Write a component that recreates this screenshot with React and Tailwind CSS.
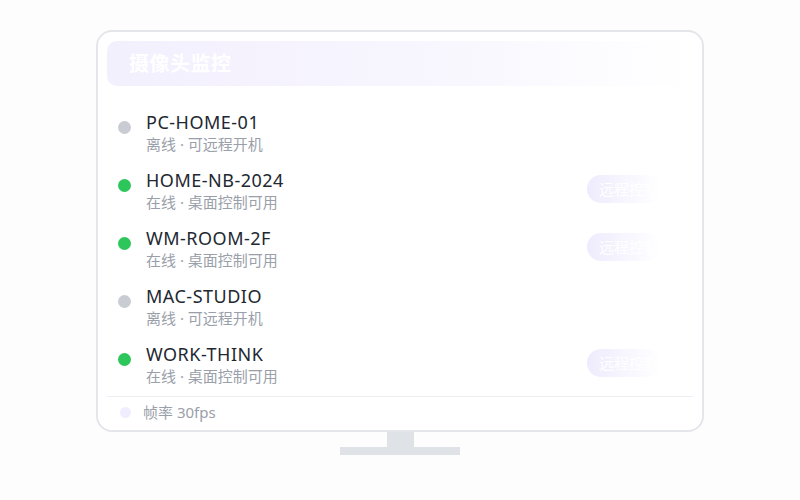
import React from 'react';

const devices = [
  { name: 'PC-HOME-01', online: false },
  { name: 'HOME-NB-2024', online: true },
  { name: 'WM-ROOM-2F', online: true },
  { name: 'MAC-STUDIO', online: false },
  { name: 'WORK-THINK', online: true },
];

const DeviceRow = ({ device }) => (
  <div className="flex items-center h-[58px]">
    <span
      className={`w-[13px] h-[13px] rounded-full ml-[11px] mr-[15px] mb-[12px] shrink-0 ${
        device.online ? 'bg-[#2dc65a]' : 'bg-[#c9ccd3]'
      }`}
    />
    <div className="flex flex-col">
      <span className="text-[18px] leading-[22px] text-[#222831] tracking-[0.5px]">{device.name}</span>
      <span className="text-[15px] leading-[22px] text-[#9aa0aa]">
        {device.online ? '在线 · 桌面控制可用' : '离线 · 可远程开机'}
      </span>
    </div>
    {device.online && (
      <div className="ml-auto mr-[32px] mb-[4px] w-[74px] h-[28px] rounded-full bg-gradient-to-r from-[#efebfd] to-[#efebfd00] flex items-center pl-[12px]">
        <span className="text-[15px] text-white whitespace-nowrap overflow-hidden">远程控制</span>
      </div>
    )}
  </div>
);

export default function App() {
  return (
    <div
      className="w-[800px] h-[500px] bg-[#fdfdfd] flex flex-col items-center pt-[30px]"
      style={{ fontFamily: '"Noto Sans", "Noto Sans CJK SC", sans-serif' }}
    >
      <div className="w-[608px] h-[402px] border-2 border-[#e4e6ea] rounded-[16px] bg-white p-[9px] flex flex-col">
        <div className="h-[45px] rounded-[10px] bg-gradient-to-r from-[#f3f0fe] via-[#f7f5fe] to-[#ffffff00] flex items-center px-[22px] shrink-0">
          <span className="text-[20px] font-bold text-white tracking-[0.5px]">摄像头监控</span>
        </div>
        <div className="flex flex-col mt-[18px]">
          {devices.map((d) => (
            <DeviceRow key={d.name} device={d} />
          ))}
        </div>
        <div className="mt-auto border-t border-[#eceef1] h-[34px] flex items-center mb-[-9px] pb-[2px] shrink-0">
          <span className="w-[11px] h-[11px] rounded-full bg-[#f0edfe] ml-[13px] mr-[12px]" />
          <span className="text-[15px] text-[#9aa0aa]">帧率 30fps</span>
        </div>
      </div>
      <div className="w-[27px] h-[15px] bg-[#dfe2e6]" />
      <div className="w-[120px] h-[8px] bg-[#dfe2e6]" />
    </div>
  );
}
